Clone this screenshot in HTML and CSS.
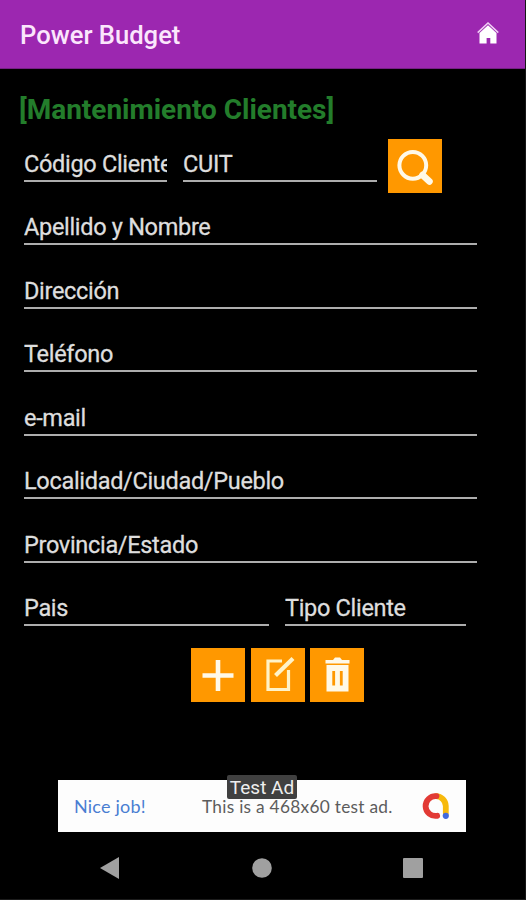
FILE: index.html
```html
<!DOCTYPE html>
<html lang="es">
<head>
<meta charset="utf-8">
<title>Power Budget</title>
<link rel="stylesheet" href="styles.css">
</head>
<body>
<div class="screen">
  <header class="bar">
    <span class="brand">Power Budget</span>
    <svg class="home" viewBox="0 0 22 22" width="22" height="22">
      <path d="M.7 10.6 11 1l10.3 9.6" fill="none" stroke="#f0cff4" stroke-width="1.500"/>
      <path d="M11 3.300 19.500 11v10.500h-6.200v-5.500H9.600v5.500H2.500V11z" fill="#fff"/>
    </svg>
  </header>
  <main>
    <h1>[Mantenimiento Clientes]</h1>
    <div class="row first">
      <div class="field code">Código Cliente</div>
      <div class="field cuit">CUIT</div>
      <button class="btn search" aria-label="Buscar">
        <svg viewBox="0 0 54 54" width="54" height="54"><circle cx="24.8" cy="26.3" r="13.4" fill="none" stroke="#fff9e8" stroke-width="4"/><path d="m34.5 36 7 6.5" stroke="#fff9e8" stroke-width="6.5" stroke-linecap="round"/></svg>
      </button>
    </div>
    <div class="row"><div class="field">Apellido y Nombre</div></div>
    <div class="row"><div class="field">Dirección</div></div>
    <div class="row"><div class="field">Teléfono</div></div>
    <div class="row"><div class="field">e-mail</div></div>
    <div class="row"><div class="field">Localidad/Ciudad/Pueblo</div></div>
    <div class="row"><div class="field">Provincia/Estado</div></div>
    <div class="row"><div class="field country">Pais</div><div class="field kind">Tipo Cliente</div></div>
    <div class="actions">
      <button class="btn" aria-label="Agregar"><svg viewBox="0 0 54 54" width="54" height="54"><path d="M11.5 27.5h31M27 12v31" stroke="#fff9e8" stroke-width="4.6"/></svg></button>
      <button class="btn" aria-label="Editar"><svg viewBox="0 0 54 54" width="54" height="54" fill="none" stroke="#fff3c8"><path d="M31 13H17v28.500h20.500V22" stroke-width="3.200"/><path d="M24.500 27.500 42 10.500" stroke-width="4.200"/></svg></button>
      <button class="btn" aria-label="Eliminar"><svg viewBox="0 0 54 54" width="54" height="54"><path d="M15.500 12h7.500l2-2.500h5l2 2.500h7.500v3.500h-24zM16.500 17h22v26.500h-22z" fill="#fff9e8"/><path d="M23.700 23v14.500M31.300 23v14.500" stroke="#ff9800" stroke-width="2.800"/></svg></button>
    </div>
  </main>
  <div class="ad">
    <span class="tag">Test Ad</span>
    <span class="nice">Nice job!</span>
    <span class="msg">This is a 468x60 test ad.</span>
    <svg class="logo" viewBox="0 0 28 28" width="28" height="28" fill="none" stroke-width="5.800" stroke-linecap="round">
      <path d="M14 4.200a10 10 0 0 1 9.800 9.800v7" stroke="#f7b90c"/>
      <path d="M15.200 23.800A9.900 9.900 0 1 1 14.500 4.200" stroke="#e23a35"/>
      <circle cx="23.800" cy="23.800" r="3.100" fill="#4169dc"/>
    </svg>
  </div>
  <nav class="nav">
    <svg viewBox="0 0 20 24" width="20" height="24"><path d="M0 12 19 1v22z"/></svg>
    <svg viewBox="0 0 20 20" width="20" height="20"><circle cx="10" cy="10" r="9.800"/></svg>
    <svg viewBox="0 0 20 20" width="20" height="20"><rect width="20" height="20" rx="1"/></svg>
  </nav>
</div>
</body>
</html>
```
FILE: styles.css
```css
* { box-sizing: border-box; }
body { margin: 0; background: #000; font-family: Roboto, "Liberation Sans", sans-serif; }
.screen { width: 526px; height: 900px; display: flex; flex-direction: column; overflow: hidden; border-bottom: 1px solid #1c1c1c; border-right: 1px solid #161616; }
.bar { height: 69px; flex: none; background: #9c27b0; display: flex; align-items: center; justify-content: space-between; padding: 0 26px 0 20px; border-bottom: 1px solid #752084; }
.brand { color: #fbe6fc; font-size: 25.6px; font-weight: 500; line-height: 30px; padding-top: 2px; }
.home { margin-top: -3px; }
main { flex: none; height: 711px; padding: 0 0 0 24px; }
h1 { margin: 0 0 0 -5px; height: 60px; padding-top: 25px; color: #237d2b; font-size: 28px; line-height: 32px; font-weight: 700; white-space: nowrap; letter-spacing: -.02px; }
.row { height: 63.5px; width: 453px; display: flex; align-items: flex-end; gap: 16px; }
.row.first { height: 52.5px; }
.field { width: 100%; height: 35px; flex: none; overflow: hidden; white-space: nowrap; color: #dedede; font-size: 23.5px; letter-spacing: -.31px; line-height: 34px; -webkit-text-stroke: .3px #dedede; border-bottom: 2px solid #adadad; }
.code { width: 143px; }
.cuit { width: 194px; }
.country { width: 245px; }
.kind { width: 181px; }
.btn { width: 54px; height: 54px; padding: 0; border: 0; background: #ff9800; flex: none; display: block; }
.btn svg { display: block; }
.search { margin: 0 0 -11.5px -5px; }
.actions { display: flex; gap: 5.5px; padding: 21.5px 0 0 167px; }
.ad { position: relative; flex: none; width: 408px; height: 52px; margin-left: 58px; background: #fdfdfd; display: flex; align-items: center; padding: 0 16px; font-family: Lato, sans-serif; }
.tag { position: absolute; left: 169px; top: -5px; width: 70px; height: 24px; border-radius: 2px; background: #404040; color: #eee; font: 19px/25px Roboto, sans-serif; text-align: center; white-space: nowrap; }
.nice { width: 128px; color: #4a7ed2; font-size: 18px; letter-spacing: .2px; }
.msg { color: #5c5c5c; font-size: 17.3px; letter-spacing: .28px; white-space: nowrap; }
.logo { margin-left: auto; }
.nav { flex: 1; display: flex; align-items: center; justify-content: space-between; padding: 5px 102px 0 100px; fill: #a0a0a0; }
```
